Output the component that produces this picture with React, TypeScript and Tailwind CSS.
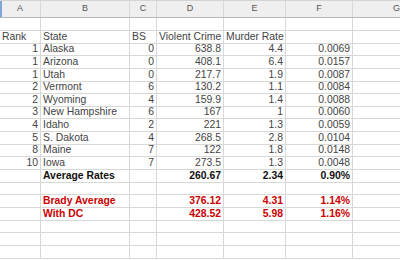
const cols = ["w-[41px]", "w-[89px]", "w-[27px]", "w-[67px]", "w-[62px]", "w-[67px]", "w-[88px]"];

type Cell = { v: string; right?: boolean };
type Row = { cells: Cell[]; tone?: "bold" | "red" };

const r = (v: string): Cell => ({ v, right: true });
const l = (v: string): Cell => ({ v });

const rows: Row[] = [
  { cells: [] },
  { cells: [l("Rank"), l("State"), l("BS"), l("Violent Crime"), l("Murder Rate")] },
  { cells: [r("1"), l("Alaska"), r("0"), r("638.8"), r("4.4"), r("0.0069")] },
  { cells: [r("1"), l("Arizona"), r("0"), r("408.1"), r("6.4"), r("0.0157")] },
  { cells: [r("1"), l("Utah"), r("0"), r("217.7"), r("1.9"), r("0.0087")] },
  { cells: [r("2"), l("Vermont"), r("6"), r("130.2"), r("1.1"), r("0.0084")] },
  { cells: [r("2"), l("Wyoming"), r("4"), r("159.9"), r("1.4"), r("0.0088")] },
  { cells: [r("3"), l("New Hampshire"), r("6"), r("167"), r("1"), r("0.0060")] },
  { cells: [r("4"), l("Idaho"), r("2"), r("221"), r("1.3"), r("0.0059")] },
  { cells: [r("5"), l("S. Dakota"), r("4"), r("268.5"), r("2.8"), r("0.0104")] },
  { cells: [r("8"), l("Maine"), r("7"), r("122"), r("1.8"), r("0.0148")] },
  { cells: [r("10"), l("Iowa"), r("7"), r("273.5"), r("1.3"), r("0.0048")] },
  { cells: [l(""), l("Average Rates"), l(""), r("260.67"), r("2.34"), r("0.90%")], tone: "bold" },
  { cells: [] },
  { cells: [l(""), l("Brady Average"), l(""), r("376.12"), r("4.31"), r("1.14%")], tone: "red" },
  { cells: [l(""), l("With DC"), l(""), r("428.52"), r("5.98"), r("1.16%")], tone: "red" },
  { cells: [] },
  { cells: [] },
  { cells: [] },
];

export default function App() {
  return (
    <div className="w-[400px] h-[260px] overflow-hidden bg-white font-['Liberation_Sans',Arial,sans-serif]">
      {/* column letters */}
      <div className="flex h-[18px] bg-[#efefef] border-b border-[#b8b8b8] border-t border-t-[#d4d4d4] relative">
        <div className="absolute left-0 top-0 w-[2px] h-full bg-[#7fa6d9]" />
        {["A", "B", "C", "D", "E", "F", "G"].map((h, i) => (
          <div
            key={h}
            className={`${cols[i]} shrink-0 border-r border-[#d8d8d8] flex items-center justify-center text-[9px] text-[#555]`}
          >
            {h}
          </div>
        ))}
      </div>
      {rows.map((row, ri) => (
        <div
          key={ri}
          className={`flex border-b border-[#d8d8d8] ${ri === 0 ? "h-[13px]" : "h-[12.65px]"}`}
        >
          {cols.map((w, ci) => {
            const c = row.cells[ci];
            const tone =
              row.tone === "red" && ci > 0
                ? "font-bold text-[#cc0000]"
                : row.tone === "bold" && ci > 0
                ? "font-bold text-[#111]"
                : "text-[#444]";
            return (
              <div
                key={ci}
                className={`${w} shrink-0 border-r border-[#d8d8d8] flex items-center px-[2px] text-[10.4px] leading-none whitespace-nowrap overflow-hidden ${
                  c?.right ? "justify-end" : "justify-start"
                } ${tone}`}
              >
                {c?.v ?? ""}
              </div>
            );
          })}
        </div>
      ))}
    </div>
  );
}
